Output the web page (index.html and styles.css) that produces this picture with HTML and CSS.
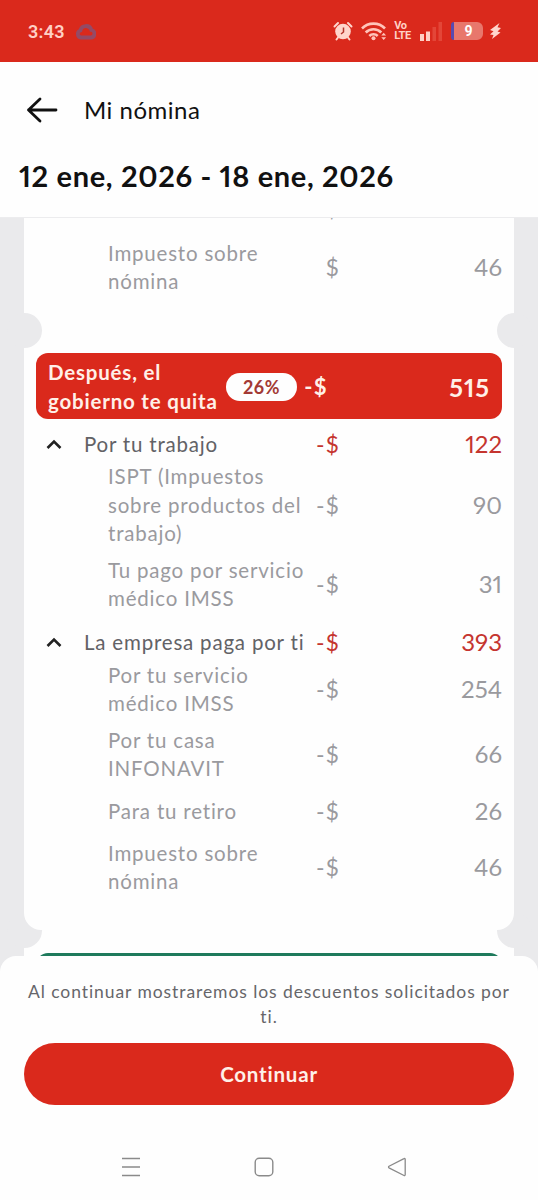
FILE: index.html
```html
<!DOCTYPE html>
<html lang="es">
<head>
  <meta charset="UTF-8">
  <meta name="viewport" content="width=device-width, initial-scale=1.0">
  <title>Mi nómina</title>
  <link rel="stylesheet" href="styles.css">
</head>
<body>
  <div class="status-bar">
    <div class="status-left">
      <span class="clock">3:43</span>
      <svg class="cloud" width="20" height="17" viewBox="0 0 20 17">
        <path d="M5 14.5a3.6 3.6 0 0 1-.6-7A5.7 5.7 0 0 1 15.4 7 3.8 3.8 0 0 1 15 14.5z" fill="none" stroke="#944a66" stroke-width="3.8"/>
      </svg>
    </div>
    <div class="status-right">
      <svg width="20" height="20" viewBox="0 0 20 20">
        <path d="M1.5 5.5 5 2M18.5 5.5 15 2M5 16.5l-1.500 2M15 16.500l1.500 2" fill="none" stroke="#ffd5cc" stroke-width="2" stroke-linecap="round"/>
        <circle cx="10" cy="10.500" r="7.800" fill="#ffd5cc"/>
        <path d="M10.500 6.500v4.500L8 13" fill="none" stroke="#b5352b" stroke-width="1.500"/>
      </svg>
      <svg class="wifi" width="26" height="20" viewBox="0 0 26 20">
        <g fill="none" stroke="#ffc4ba" stroke-width="2.600">
          <path d="M1 7.500a16 16 0 0 1 23 0"/>
          <path d="M4.700 11.500a11 11 0 0 1 15.600 0"/>
          <path d="M8.300 15a6 6 0 0 1 8.400 0"/>
        </g>
        <circle cx="12.500" cy="17.300" r="2" fill="#ffc4ba"/>
        <path d="M20.300 14.500 22.700 11.800l2.400 2.700zM20.300 16.300l2.400 2.700 2.400-2.700z" fill="#ffc4ba"/>
      </svg>
      <span class="volte">Vo<br>LTE</span>
      <svg class="signal" width="22" height="19" viewBox="0 0 22 19">
        <path d="M0 12h4v7H0zM6 9.500h4V19H6z" fill="#ffd0c5"/>
        <path d="M12.500 5h3.500v14h-3.500zM18.500 0H22v19h-3.500z" fill="#e34638"/>
      </svg>
      <div class="battery"><span>9</span></div>
      <svg class="bolt" width="13" height="18" viewBox="0 0 13 18">
        <path d="M10.500 1 1 8l3.500 1.200L1 12.500l3.500.5L3 17l8.500-6.500-3-1L12 6l-3.500-.7z" fill="#ffd5cc"/>
      </svg>
    </div>
  </div>

  <header>
    <div class="title-row">
      <svg width="32" height="26" viewBox="0 0 32 26">
        <path d="M14 2 2.500 13 14 24M2.500 13H30" fill="none" stroke="#111" stroke-width="2.800" stroke-linecap="round" stroke-linejoin="round"/>
      </svg>
      <h1>Mi nómina</h1>
    </div>
    <h2>12 ene, 2026 - 18 ene, 2026</h2>
  </header>

  <main>
    <section class="ticket ticket-scrolled">
      <div class="item item-cut"><span class="label"></span><span class="sign">$</span><span class="amount"></span></div>
      <div class="item"><span class="label">Impuesto sobre nómina</span><span class="sign">$</span><span class="amount">46</span></div>
    </section>

    <section class="ticket ticket-taxes">
      <div class="banner">
        <span class="banner-text">Después, el<br>gobierno te quita</span>
        <span class="pill">26%</span>
        <span class="sign">-$</span>
        <span class="amount">515</span>
      </div>

      <div class="group">
        <svg class="chevron" width="16" height="11" viewBox="0 0 16 11"><path d="M1.500 9 8 2.500 14.500 9" fill="none" stroke="#222" stroke-width="2.600"/></svg>
        <span class="label">Por tu trabajo</span><span class="sign">-$</span><span class="amount">122</span>
      </div>
      <div class="item"><span class="label">ISPT (Impuestos sobre productos del trabajo)</span><span class="sign">-$</span><span class="amount">90</span></div>
      <div class="item"><span class="label">Tu pago por servicio médico IMSS</span><span class="sign">-$</span><span class="amount">31</span></div>

      <div class="group">
        <svg class="chevron" width="16" height="11" viewBox="0 0 16 11"><path d="M1.500 9 8 2.500 14.500 9" fill="none" stroke="#222" stroke-width="2.600"/></svg>
        <span class="label">La empresa paga por ti</span><span class="sign">-$</span><span class="amount">393</span>
      </div>
      <div class="item"><span class="label">Por tu servicio<br>médico IMSS</span><span class="sign">-$</span><span class="amount">254</span></div>
      <div class="item"><span class="label">Por tu casa<br>INFONAVIT</span><span class="sign">-$</span><span class="amount">66</span></div>
      <div class="item"><span class="label">Para tu retiro</span><span class="sign">-$</span><span class="amount">26</span></div>
      <div class="item"><span class="label">Impuesto sobre nómina</span><span class="sign">-$</span><span class="amount">46</span></div>
    </section>

    <section class="ticket ticket-next">
      <div class="banner banner-green"></div>
    </section>
  </main>

  <footer>
    <p>Al continuar mostraremos los descuentos solicitados por ti.</p>
    <button>Continuar</button>
    <nav class="system-nav">
      <svg width="20" height="20" viewBox="0 0 20 20"><path d="M1 1.500h18M1 10h18M1 18.500h18" stroke="#8a8a8a" stroke-width="1.400"/></svg>
      <svg width="20" height="20" viewBox="0 0 20 20"><rect x="1.200" y="1.200" width="17.600" height="17.600" rx="4" fill="none" stroke="#8a8a8a" stroke-width="1.400"/></svg>
      <svg width="20" height="20" viewBox="0 0 20 20"><path d="M17 1.600 2 9.200a1 1 0 0 0 0 1.700l15 7.600a.8.8 0 0 0 1.200-.8V2.300A.8.8 0 0 0 17 1.600z" fill="none" stroke="#8a8a8a" stroke-width="1.300"/></svg>
    </nav>
  </footer>
</body>
</html>
```

FILE: styles.css
```css
* {
  margin: 0;
  padding: 0;
  box-sizing: border-box;
}

body {
  width: 538px;
  height: 1200px;
  display: flex;
  flex-direction: column;
  overflow: hidden;
  background-color: #fefefe;
  font-family: Lato, 'Liberation Sans', sans-serif;
  font-variant-numeric: proportional-nums;
  color: #111;
}

/* Status bar */
.status-bar {
  height: 62px;
  flex: none;
  display: flex;
  justify-content: space-between;
  align-items: center;
  padding: 0 36px 0 28px;
  background-color: #da291c;
  color: #ffd0c5;
}

.status-left,
.status-right {
  display: flex;
  align-items: center;
}

.clock {
  font-family: Roboto, sans-serif;
  font-size: 18px;
  font-weight: 600;
  letter-spacing: 0.3px;
}

.cloud {
  margin-left: 11px;
}

.wifi {
  margin-left: 8px;
}

.volte {
  margin-left: 7px;
  font-family: Roboto, sans-serif;
  font-size: 11px;
  font-weight: 700;
  line-height: 10px;
  letter-spacing: -0.3px;
}

.signal {
  margin-left: 9px;
}

.battery {
  width: 32px;
  height: 18px;
  margin-left: 9px;
  border-left: 3px solid #584ab0;
  border-radius: 3px 6px 6px 3px;
  background-color: #e8776c;
  color: #fff;
  font-family: Roboto, sans-serif;
  font-size: 14px;
  font-weight: 700;
  line-height: 18px;
  text-align: center;
}

.bolt {
  margin-left: 6px;
}

/* Header */
header {
  height: 156px;
  flex: none;
  padding: 31px 19px 0;
  border-bottom: 1px solid #ececee;
}

.title-row {
  display: flex;
  align-items: center;
  height: 34px;
  padding-left: 7px;
}

h1 {
  margin: -2px 0 0 26px;
  font-size: 24px;
  font-weight: 400;
  letter-spacing: 0.5px;
}

h2 {
  margin-top: 32px;
  font-size: 29px;
  font-weight: 700;
  line-height: 34px;
  letter-spacing: 0.65px;
  white-space: nowrap;
}

/* Tickets */
main {
  height: 762px;
  flex: none;
  overflow: hidden;
  padding: 0 24px;
  background-color: #eaeaec;
}

.ticket {
  display: flow-root;
  position: relative;
  padding: 23px 12px 28px;
  background-color: #fefefe;
}

/* Round notches punched where one ticket meets the next */
.ticket-taxes::before,
.ticket-taxes::after,
.ticket-next::before,
.ticket-next::after {
  content: '';
  position: absolute;
  top: -17px;
  width: 35px;
  height: 35px;
  border-radius: 50%;
  background-color: #eaeaec;
}

.ticket-taxes::before,
.ticket-next::before {
  left: -17px;
}

.ticket-taxes::after,
.ticket-next::after {
  right: -18px;
}

.ticket-scrolled {
  height: 112px;
  padding-top: 0;
}

/* sits over the next ticket, so its bottom corners cover those notches */
.ticket-taxes {
  height: 600px;
  z-index: 1;
  border-radius: 0 0 17px 17px;
}

.ticket-next {
  height: 50px;
}

.item,
.group {
  display: flex;
  align-items: center;
}

.item {
  min-height: 47.5px;
  padding: 4.6px 0 4.6px 72px;
  color: #9a9a9e;
}

.item-cut {
  margin-top: -37px;
  min-height: 53px;
}

.group {
  height: 27px;
  margin-top: 11.8px;
  padding-left: 10px;
  color: #626266;
}

.label {
  flex: none;
  width: 200px;
  font-size: 20.5px;
  line-height: 28.2px;
  letter-spacing: 0.8px;
}

.group .label {
  width: 224px;
  margin-left: 22px;
  white-space: nowrap;
}

.sign {
  width: 32px;
  flex: none;
  margin-right: -1px;
  font-size: 23px;
  line-height: 28px;
  letter-spacing: 1.3px;
  text-align: right;
}

.amount {
  flex: 1;
  font-size: 24px;
  line-height: 28px;
  text-align: right;
}

.group .sign,
.group .amount {
  color: #c5352f;
}

.banner {
  height: 66px;
  display: flex;
  align-items: center;
  padding: 1px 12px 0;
  border-radius: 12px;
  background-color: #da291c;
  color: #fff0e8;
}

.banner-green {
  background-color: #1e7a5c;
}

.banner-text {
  width: 178px;
  flex: none;
  font-size: 20.5px;
  font-weight: 700;
  line-height: 28.3px;
  letter-spacing: 0.8px;
  white-space: nowrap;
}

.pill {
  width: 71px;
  height: 28px;
  flex: none;
  border-radius: 14px;
  background-color: #fefefe;
  color: #a33a35;
  font-size: 18px;
  font-weight: 700;
  line-height: 28px;
  letter-spacing: 0.6px;
  text-align: center;
}

.banner .sign {
  width: 31px;
  font-size: 22px;
  font-weight: 700;
}

.banner .amount {
  font-size: 25px;
  font-weight: 700;
  letter-spacing: 1px;
}

/* Bottom sheet */
footer {
  position: relative;
  z-index: 2;
  height: 244px;
  flex: none;
  margin-top: -24px;
  padding: 23px 24px 0;
  border-radius: 16px 16px 0 0;
  background-color: #fefefe;
}

footer p {
  color: #66666a;
  font-size: 17.5px;
  line-height: 25px;
  letter-spacing: 0.92px;
  text-align: center;
}

button {
  display: block;
  width: 100%;
  height: 62px;
  margin-top: 14px;
  border: none;
  border-radius: 31px;
  background-color: #da291c;
  color: #fff0e8;
  font-family: inherit;
  font-size: 20.5px;
  font-weight: 700;
  letter-spacing: 0.8px;
}

.system-nav {
  display: flex;
  justify-content: space-between;
  padding: 52px 107px 0 97px;
}
```
